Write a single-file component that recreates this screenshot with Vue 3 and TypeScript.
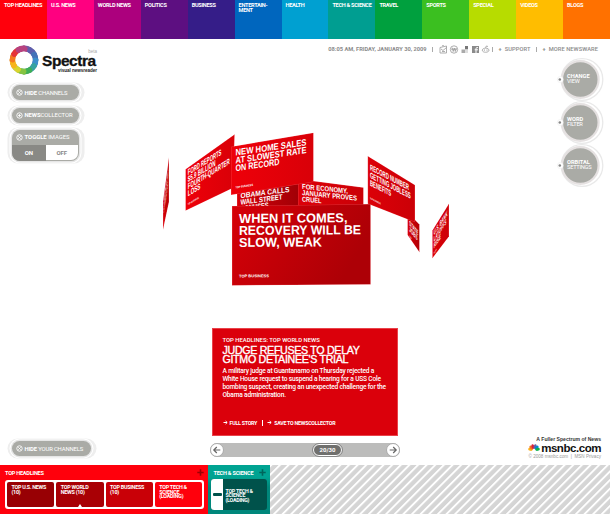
<script setup lang="ts">
interface Channel { label: string; color: string }
interface Line { t: string; y: number; w: number }
interface Panel { points: string; fill: string; matrix: string; size: number; lines: Line[]; tag?: string; tagY?: number; tagW?: number; tagSize?: number }

const channels: Channel[] = [
  { label: 'TOP HEADLINES', color: '#ff000c' },
  { label: 'U.S. NEWS', color: '#ff0080' },
  { label: 'WORLD NEWS', color: '#ac007d' },
  { label: 'POLITICS', color: '#5d0f81' },
  { label: 'BUSINESS', color: '#351d88' },
  { label: 'ENTERTAIN-\nMENT', color: '#0066be' },
  { label: 'HEALTH', color: '#00a0d1' },
  { label: 'TECH & SCIENCE', color: '#009e91' },
  { label: 'TRAVEL', color: '#00a03e' },
  { label: 'SPORTS', color: '#3bbf20' },
  { label: 'SPECIAL', color: '#b7dc00' },
  { label: 'VIDEOS', color: '#ffbd00' },
  { label: 'BLOGS', color: '#ff7100' },
]

const panels: Panel[] = [
  { points: '169,157 169,202 163,230 163,201', fill: 'url(#gDark)', matrix: 'matrix(.1 -.68 0 1 163.8 205)', size: 9, lines: [{ t: 'SENATE', y: 0, w: 44 }, { t: 'STIMULUS', y: 9, w: 40 }] },
  { points: '237,188 299,178 299,207 237,207', fill: 'url(#gBack)', matrix: 'matrix(1 -.13 0 1 240.5 198.2)', size: 7.4, lines: [{ t: 'OBAMA CALLS', y: 0, w: 49 }, { t: 'WALL STREET', y: 6.6, w: 42 }, { t: 'BONUSES', y: 13, w: 28 }] },
  { points: '298,179 363.5,187.5 363.5,207 298,207', fill: 'url(#gMid)', matrix: 'matrix(1 .1 0 1 302 188.8)', size: 7.2, lines: [{ t: 'FOR ECONOMY,', y: 0, w: 46 }, { t: 'JANUARY PROVES', y: 6.3, w: 55 }, { t: 'CRUEL', y: 12.6, w: 19.5 }] },
  { points: '407.5,212 419.5,224.5 419.5,252.5 407.5,235', fill: 'url(#gDark)', matrix: 'matrix(.55 .65 0 1 409.3 225)', size: 7, lines: [{ t: 'STATE', y: 0, w: 16 }, { t: 'JOBS', y: 6, w: 15 }], tag: 'TOP', tagY: 12, tagW: 4, tagSize: 2.5 },
  { points: '432.3,230.5 449,203.5 449,236.5 432.3,258.5', fill: 'url(#gMid)', matrix: 'matrix(.5 -.74 0 1 433.8 235.5)', size: 7.6, lines: [{ t: 'U.S. BANK', y: 0, w: 27 }, { t: 'LAYOFFS', y: 6.6, w: 25 }, { t: 'RISE', y: 13.2, w: 14 }], tag: 'TOP', tagY: 19, tagW: 6, tagSize: 2.5 },
  { points: '367.7,156 415,185 415,222.3 367.7,203.7', fill: 'url(#gMid)', matrix: 'matrix(.83 .43 0 1 370 170)', size: 8.3, lines: [{ t: 'RECORD NUMBER', y: 0, w: 47 }, { t: 'GETTING JOBLESS', y: 7.7, w: 49 }, { t: 'BENEFITS', y: 15.4, w: 25.5 }], tag: 'TOP BUSINESS', tagY: 29, tagW: 13, tagSize: 2.6 },
  { points: '185.5,169.3 234.7,134.3 233,188 185.5,210.7', fill: 'url(#gBright)', matrix: 'matrix(.84 -.51 0 1 187.8 175.2)', size: 8.4, lines: [{ t: 'FORD REPORTS', y: 0, w: 40 }, { t: '$5.9 BILLION', y: 7.1, w: 33 }, { t: 'FOURTH-QUARTER', y: 14.2, w: 50 }, { t: 'LOSS', y: 21.3, w: 15 }], tag: 'TOP BUSINESS', tagY: 30, tagW: 13, tagSize: 2.6 },
  { points: '231,146.7 313.5,132.7 313.5,182 231,195', fill: 'url(#gBright)', matrix: 'matrix(1 -.145 0 1 235.5 155.6)', size: 9.2, lines: [{ t: 'NEW HOME SALES', y: 0, w: 71 }, { t: 'AT SLOWEST RATE', y: 7.8, w: 71 }, { t: 'ON RECORD', y: 15.6, w: 44 }], tag: 'TOP BUSINESS', tagY: 32.8, tagW: 17.5, tagSize: 2.9 },
  { points: '232,206 370.7,204 370.7,284.5 232,285.5', fill: 'url(#gFront)', matrix: 'matrix(1 -.006 0 1 239 222.9)', size: 13, lines: [{ t: 'WHEN IT COMES,', y: 0, w: 108.5 }, { t: 'RECOVERY WILL BE', y: 12, w: 122 }, { t: 'SLOW, WEAK', y: 24, w: 83 }], tag: 'TOP BUSINESS', tagY: 54.5, tagW: 30, tagSize: 4 },
]

const dials: [string, string][] = [['CHANGE', 'VIEW'], ['WORD', 'FILTER'], ['ORBITAL', 'SETTINGS']]
const headlines = [
  { label: 'TOP U.S. NEWS\n(10)', color: '#980004', active: false },
  { label: 'TOP WORLD\nNEWS (10)', color: '#a90005', active: true },
  { label: 'TOP BUSINESS\n(10)', color: '#c90007', active: false },
  { label: 'TOP TECH &\nSCIENCE\n(LOADING)', color: '#ff000c', active: false },
]
const techLabel = 'TOP TECH &\nSCIENCE\n(LOADING)'
const wheel = ['#7a56a5', '#5d5fae', '#4472b8', '#3b8fcb', '#36a3a0', '#3fae56', '#85c441', '#d8d42f', '#f8b41c', '#f47a20', '#e5333a', '#b8427f']
const feathers = [
  { c: '#fbb017', r: -80 }, { c: '#f36f21', r: -48 }, { c: '#d9213b', r: -17 },
  { c: '#6460aa', r: 17 }, { c: '#0089d0', r: 48 }, { c: '#0db14b', r: 80 },
]
</script>

<template>
  <div class="page">
    <nav class="channels">
      <a v-for="c in channels" :key="c.label" class="channel" :style="{ background: c.color }">{{ c.label }}</a>
    </nav>

    <main class="stage">
      <aside class="left">
        <div class="logo">
          <svg class="wheel" viewBox="-15 -15 30 30">
            <circle r="11.5" fill="none" stroke="#a08a9a" stroke-width="5.4" />
            <path v-for="(c, i) in wheel" :key="c" d="M-1 -14.4 A14.4 14.4 0 0 1 7.8 -12.1 Q10.5 -7.5 6.2 -5.8 A8.7 8.7 0 0 0 -1 -8.7 Q-4 -11 -1 -14.4Z" :fill="c" :transform="`rotate(${i * 30})`" />
            <circle r="8.6" fill="#fff" />
          </svg>
          <div class="wordmark">
            <span class="beta">beta</span>
            <span class="name">Spectra</span>
            <span class="tagline">visual newsreader</span>
          </div>
        </div>
        <button class="pill hide"><svg class="ico" viewBox="0 0 8 8"><circle cx="4" cy="4" r="3.1" /><path d="M2.6 2.6 5.4 5.4M5.4 2.6 2.6 5.4" /></svg><b>HIDE</b> CHANNELS</button>
        <button class="pill news"><svg class="ico" viewBox="0 0 8 8"><circle cx="4" cy="4" r="3.1" /><path d="M4 2.4V5.6M2.4 4H5.6" /></svg><b>NEWS</b>COLLECTOR</button>
        <div class="pill toggle">
          <div class="toggle-head"><svg class="ico" viewBox="0 0 8 8"><circle cx="4" cy="4" r="3.1" /><path d="M2.6 2.6 5.4 5.4M5.4 2.6 2.6 5.4" /></svg><b>TOGGLE</b> IMAGES</div>
          <div class="switch"><span class="on">ON</span><span class="off">OFF</span></div>
        </div>
        <button class="pill yours"><svg class="ico" viewBox="0 0 8 8"><circle cx="4" cy="4" r="3.1" /><path d="M2.6 2.6 5.4 5.4M5.4 2.6 2.6 5.4" /></svg><b>HIDE</b> YOUR CHANNELS</button>
      </aside>

      <div class="utility">
        <span class="date">08:05 AM, FRIDAY, JANUARY 30, 2009</span>
        <i class="bar"></i>
        <svg class="social" viewBox="0 0 51 9">
          <g fill="none" stroke="#999" stroke-width=".8">
            <path d="M1 2.5 7.5 1V8H1ZM2 4 4 5.5 7.5 2.5M3 6.5H6M3 1 5 0" />
            <circle cx="15" cy="4.5" r="3.7" /><path d="M12 4.2H18M13.2 2.6 14.2 6.5 15.3 3 16.3 6.5 17.2 3" />
            <path d="M43.3 5.2C43.3 2.5 50 2.5 50 5.2S43.3 8 43.3 5.2ZM46.6 3 47.3 1 49 1.5" />
          </g>
          <path fill="#aaa" d="M22.5 4.5H26V8H22.5Z" /><path fill="#777" d="M26 1H29V4.5H26Z" /><path fill="#ddd" d="M26 4.5H29V8H26Z" />
          <path fill="#8b8b8b" d="M33 1H40V8H33Z" /><path d="M39 2.6H38Q37 2.6 37 3.6V8M35.7 4.8H39" fill="none" stroke="#fff" />
          <circle cx="45.4" cy="5" r=".6" fill="#888" /><circle cx="48" cy="5" r=".6" fill="#888" />
        </svg>
        <i class="bar"></i>
        <span class="support"><em>+</em>SUPPORT</span>
        <i class="bar"></i>
        <span class="more"><em>+</em>MORE NEWSWARE</span>
      </div>

      <section class="center">
        <svg class="orbit" viewBox="110 59 390 269">
          <defs>
            <linearGradient id="gBright"><stop offset="0" stop-color="#ee0009" /><stop offset="1" stop-color="#d90008" /></linearGradient>
            <linearGradient id="gMid"><stop offset="0" stop-color="#dc0008" /><stop offset="1" stop-color="#cb0007" /></linearGradient>
            <linearGradient id="gDark"><stop offset="0" stop-color="#d80008" /><stop offset="1" stop-color="#b00006" /></linearGradient>
            <linearGradient id="gBack"><stop offset="0" stop-color="#d80008" /><stop offset="1" stop-color="#a00006" /></linearGradient>
            <linearGradient id="gFront" x2="1" y2=".35"><stop offset="0" stop-color="#d60008" /><stop offset="1" stop-color="#ad0006" /></linearGradient>
            <clipPath v-for="(p, i) in panels" :id="`clip${i}`" :key="i"><polygon :points="p.points" /></clipPath>
          </defs>
          <g v-for="(p, i) in panels" :key="i" :clip-path="`url(#clip${i})`">
            <polygon :points="p.points" :fill="p.fill" stroke="#f4606a" stroke-width=".5" />
            <g :transform="p.matrix" class="panel-text">
              <text v-for="l in p.lines" :key="l.t" :y="l.y" :font-size="p.size" :textLength="l.w" lengthAdjust="spacingAndGlyphs">{{ l.t }}</text>
              <text v-if="p.tag" :y="p.tagY" :font-size="p.tagSize" :textLength="p.tagW" lengthAdjust="spacingAndGlyphs">{{ p.tag }}</text>
            </g>
          </g>
        </svg>
        <article class="story">
          <div class="kicker">TOP HEADLINES: TOP WORLD NEWS</div>
          <h1>JUDGE REFUSES TO DELAY<br />GITMO DETAINEE'S TRIAL</h1>
          <p>A military judge at Guantanamo on Thursday rejected a<br />White House request to suspend a hearing for a USS Cole<br />bombing suspect, creating an unexpected challenge for the<br />Obama administration.</p>
          <footer><span class="act"><svg viewBox="0 0 5 5"><path d="M.5 2.5H4M2.6 1 4.2 2.5 2.6 4" /></svg>FULL STORY</span><i></i><span class="act"><svg viewBox="0 0 5 5"><path d="M.5 2.5H4M2.6 1 4.2 2.5 2.6 4" /></svg>SAVE TO NEWSCOLLECTOR</span></footer>
        </article>
        <div class="pager">
          <svg class="arrow" viewBox="0 0 14 14"><circle cx="7" cy="7" r="6.5" /><path d="M10.3 7H4M6.8 4 3.8 7 6.8 10" /></svg>
          <span class="count">20/30</span>
          <svg class="arrow" viewBox="0 0 14 14"><circle cx="7" cy="7" r="6.5" /><path d="M3.7 7H10M7.2 4 10.2 7 7.2 10" /></svg>
        </div>
      </section>

      <aside class="right">
        <div v-for="d in dials" :key="d[0]" class="dial-row">
          <svg class="dial-back" viewBox="0 0 48 43"><circle cx="26" cy="21.5" r="20.8" fill="#fff" stroke="#e9e9e9" stroke-width="1.3" /><circle cx="24.3" cy="21.5" r="18.3" fill="#aaaba6" stroke="#e5e1e1" stroke-width="2.2" /><circle cx="4.2" cy="21.5" r="3" fill="#fff" stroke="#eee" stroke-width=".6" /><circle cx="3.8" cy="21.5" r="1.3" fill="#888" /></svg>
          <span class="dial-label"><b>{{ d[0] }}</b><span>{{ d[1] }}</span></span>
        </div>
        <div class="brand">
          <span class="spectrum">A Fuller Spectrum of News</span>
          <div class="msnbc">
            <svg viewBox="-6 -6 12 8"><ellipse v-for="f in feathers" :key="f.c" cx="0" cy="-3.6" rx="1.45" ry="2.3" :fill="f.c" :transform="`rotate(${f.r})`" /></svg>
            <span>msnbc.com</span>
          </div>
          <span class="legal">© 2008 msnbc.com&nbsp; |&nbsp; MSN Privacy</span>
        </div>
      </aside>
    </main>

    <section class="tray">
      <div class="group red">
        <header>TOP HEADLINES<svg viewBox="0 0 7 7"><path d="M3.5 .3V6.7M.3 3.5H6.7" /></svg></header>
        <div class="tiles">
          <div v-for="h in headlines" :key="h.label" class="tile" :class="{ active: h.active }" :style="{ background: h.color }">{{ h.label }}</div>
        </div>
      </div>
      <div class="group teal">
        <header>TECH &amp; SCIENCE<svg viewBox="0 0 7 7"><path d="M3.5 .3V6.7M.3 3.5H6.7" /></svg></header>
        <div class="tech"><div class="grip"><i></i></div><div class="tech-label">{{ techLabel }}</div></div>
      </div>
      <svg class="hatch"><defs><pattern id="stripe" width="6.1" height="6.1" patternUnits="userSpaceOnUse" patternTransform="rotate(45)"><rect width="6.1" height="6.1" fill="#d5d5d5" /><rect width="1.9" height="6.1" fill="#fff" /></pattern></defs><rect width="100%" height="100%" fill="url(#stripe)" /></svg>
    </section>
  </div>
</template>

<style>
body { background: #fff; overflow: hidden; }
</style>

<style scoped>
* { box-sizing: border-box; }
.page { width: 610px; height: 522px; display: flex; flex-direction: column; background: #fff; font-family: Roboto, "Liberation Sans", sans-serif; font-size: 5.6px; }
.channels { height: 39px; display: grid; grid-template-columns: repeat(13, 1fr); }
.channel { padding: 3px 0 0 4px; color: #fff; font-weight: 700; font-size: 5.6px; line-height: 5px; letter-spacing: -.3px; white-space: pre; }
.stage { height: 426px; display: grid; grid-template-columns: 110px 390px 110px; grid-template-rows: 20px 406px; }
.left { grid-row: 1 / 3; display: flex; flex-direction: column; align-items: flex-start; padding: 6px 0 7px 9px; }
.logo { display: flex; height: 33px; gap: 3px; }
.wheel { width: 30px; height: 30px; }
.wordmark { display: flex; flex-direction: column; width: 55px; font-family: "Liberation Sans", sans-serif; color: #222; }
.beta { align-self: flex-end; font-size: 4.5px; line-height: 5px; margin-top: 4px; color: #aaa; }
.name { font-size: 15.5px; line-height: 14px; font-weight: 700; letter-spacing: -.45px; color: #111; -webkit-text-stroke: .3px #111; }
.tagline { align-self: flex-end; font-size: 4.6px; line-height: 5px; font-weight: 700; letter-spacing: -.05px; }
.pill { display: flex; align-items: center; border: 0; background: #aaaba6; color: #fff; width: 67px; height: 15px; padding: 0 0 0 4px; border-radius: 8px; font: 5.9px Roboto, sans-serif; letter-spacing: -.15px; margin: 0 0 0 3px; box-shadow: 0 0 0 1.4px #e6e6e6, 0 0 0 2.5px #fff, 3px 0 0 2.5px #eee, -2px 0 0 2.5px #eee; white-space: pre; }
.ico { width: 7px; height: 7px; margin-right: 1.5px; fill: none; stroke: #fff; stroke-width: 1; }
.hide { margin-top: 7px; }
.news { margin-top: 7.5px; letter-spacing: -.05px; }
.toggle { display: block; height: 31px; margin-top: 7px; padding: 0; overflow: visible; }
.toggle-head { display: flex; align-items: center; height: 15.5px; padding-left: 4px; letter-spacing: 0; }
.switch { display: grid; grid-template-columns: 1fr 1fr; height: 15.5px; border-radius: 0 0 8px 8px; overflow: hidden; text-align: center; line-height: 15px; font-size: 6px; font-weight: 700; }
.on { background: #898985; }
.off { background: #fff; color: #888; margin: 0 1px 1px 0; border-radius: 0 0 7px 0; }
.yours { width: 79px; margin-top: auto; margin-bottom: 2px; }
.utility { grid-column: 2 / 4; display: flex; align-items: center; justify-content: flex-end; padding-right: 12px; color: #8b8b8b; font-size: 5.7px; font-weight: 500; white-space: pre; }
.date { font-weight: 700; letter-spacing: 0; }
.bar { width: 1px; height: 5px; background: #aaa; margin: 0 6px 0 5px; }
.social { width: 51px; height: 9px; }
.social + .bar { margin-left: 2px; }
.utility em { font-style: normal; font-weight: 700; margin-right: 3px; }
.support, .more { letter-spacing: .08px; }
.center { display: flex; flex-direction: column; align-items: flex-start; }
.orbit { width: 390px; height: 269px; flex: none; }
.panel-text { fill: #fff; font-family: "Liberation Sans", sans-serif; font-weight: 700; }
.story { width: 186px; height: 108px; margin-left: 102px; padding: 8px 0 0 9.5px; background: #db000b; border: 1px solid #e9424a; color: #fff; white-space: nowrap; }
.kicker { font-size: 5.9px; line-height: 6px; font-weight: 500; }
h1 { margin: 2.5px 0 0; font: 400 10.7px/9.2px "Liberation Sans", sans-serif; letter-spacing: -.33px; -webkit-text-stroke: .35px #fff; }
p { margin: 3.2px 0 0; font-size: 6.6px; line-height: 8px; font-weight: 500; letter-spacing: -.19px; }
footer { display: flex; align-items: center; margin-top: 20px; height: 7px; font-size: 5.3px; font-weight: 700; letter-spacing: -.25px; }
footer i { width: 1px; height: 6px; background: #fff; margin: 0 4px 0 5px; }
.act { display: flex; align-items: center; gap: 2px; }
.act svg { width: 5px; height: 5px; fill: none; stroke: #fff; stroke-width: 1; }
.pager { width: 190px; height: 14px; margin: 7px 0 0 100px; display: flex; align-items: center; justify-content: space-between; border-radius: 8px; background: #bcbcbb; }
.arrow { width: 14px; height: 14px; fill: #fff; stroke: #aaa; stroke-width: 1; }
.arrow path { fill: none; stroke: #666; stroke-width: 1.2; }
.count { width: 29px; height: 12px; margin-left: 45px; border: 1px solid #fff; outline: .8px solid #888; border-radius: 6px; background: #70706e; color: #fff; text-align: center; line-height: 10px; font-size: 6px; font-weight: 700; }
.right { display: flex; flex-direction: column; align-items: flex-end; padding: 0 6px 5px 0; margin-top: -1px; }
.dial-row { display: grid; width: 48px; height: 43px; margin-bottom: .2px; }
.dial-row > * { grid-area: 1 / 1; }
.dial-back { width: 48px; height: 43px; }
.dial-label { z-index: 1; align-self: center; display: flex; flex-direction: column; padding-left: 11px; margin-top: -1px; color: #fff; font-size: 5.7px; line-height: 5px; }
.dial-label span { letter-spacing: -.25px; }
.brand { margin: auto 3px 0 0; display: flex; flex-direction: column; align-items: flex-end; white-space: nowrap; font-family: "Liberation Sans", sans-serif; }
.spectrum { font-size: 5.1px; line-height: 6px; font-weight: 700; color: #333; }
.msnbc { display: flex; align-items: center; height: 11px; gap: 1px; color: #111; }
.msnbc svg { width: 12px; height: 8px; }
.msnbc span { font-size: 11.5px; line-height: 10px; font-weight: 700; letter-spacing: -.45px; }
.legal { font-size: 4.6px; line-height: 7px; color: #999; }
.tray { display: flex; height: 49px; }
.group { flex: none; }
.group header { display: flex; align-items: center; justify-content: space-between; height: 15px; color: #fff; font-size: 5.6px; font-weight: 700; letter-spacing: -.25px; }
.group header svg { width: 7px; height: 7px; fill: none; stroke-width: 1.6; }
.red { width: 208px; background: #ff000c; padding: 0 4px 0 5px; }
.red header svg { stroke: #9b0005; }
.tiles { display: grid; grid-template-columns: repeat(4, 1fr); gap: 2px; height: 29px; padding: 2px; background: #fff; border-radius: 3px; }
.tile { border-radius: 2px; padding: 3px 0 0 4.5px; color: #fff; font-size: 5.4px; font-weight: 700; line-height: 4.5px; letter-spacing: -.26px; white-space: pre; display: flex; flex-direction: column; justify-content: space-between; }
.active::after { content: ""; align-self: center; margin-left: -4px; border: 2.5px solid transparent; border-top: 0; border-bottom: 3px solid #fff; }
.teal { width: 62px; padding: 0 3px; background: linear-gradient(#00a392 0 12px, #00877b 22px); }
.teal header { padding: 0 1px 0 2.5px; letter-spacing: -.25px; }
.teal header svg { stroke: #00655c; }
.tech { display: flex; height: 31px; border-radius: 3px; overflow: hidden; background: #00524b; margin-top: -1px; }
.grip { flex: none; width: 12px; background: #fff; display: grid; place-items: center; }
.grip i { width: 9px; height: 3px; background: #00524b; border-radius: 1px; }
.tech-label { padding: 9.5px 0 0 2.5px; color: #fff; font-size: 5.3px; font-weight: 700; line-height: 4.5px; letter-spacing: -.25px; white-space: pre; }
.hatch { flex: 1; height: 49px; min-width: 0; }
</style>
